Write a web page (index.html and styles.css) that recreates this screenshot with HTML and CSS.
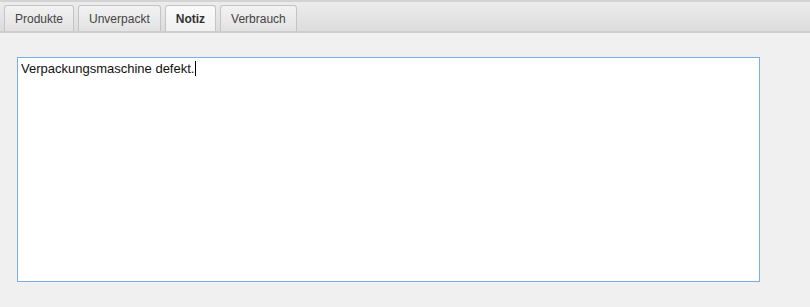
FILE: index.html
```html
<!DOCTYPE html>
<html lang="de">
<head>
    <meta charset="UTF-8">
    <title>Notiz</title>
    <link rel="stylesheet" href="styles.css">
</head>
<body>

<div class="tabbar">
    <div class="tab">Produkte</div>
    <div class="tab">Unverpackt</div>
    <div class="tab active">Notiz</div>
    <div class="tab">Verbrauch</div>
</div>

<div class="content">
    <div class="note">Verpackungsmaschine defekt.<span class="caret"></span></div>
</div>

</body>
</html>
```

FILE: styles.css
```css
body {
    margin: 0;
    background-color: #f0f0f0;
    font-family: "Liberation Sans", Arial, sans-serif;
    color: #222;
}

.tabbar {
    display: flex;
    gap: 4px;
    height: 26px;
    padding: 3px 4px 0;
    border-top: 2px solid #d3d3d3;
    border-bottom: 2px solid #cdcdcd;
    background: linear-gradient(#ececec, #dcdcdc);
}

.tab {
    display: flex;
    align-items: center;
    padding: 0 10px;
    font-size: 12px;
    color: #444;
    border: 1px solid #c4c4c4;
    border-bottom: none;
    border-radius: 3px 3px 0 0;
    background: linear-gradient(#f2f2f2, #e2e2e2);
}

.tab.active {
    font-weight: bold;
    color: #333;
    background: linear-gradient(#fafafa, #f0f0f0);
}

.content {
    padding: 24px 17px;
}

.note {
    box-sizing: border-box;
    width: 743px;
    height: 225px;
    padding: 3px;
    border: 1px solid #7aaee4;
    background: #fff;
    font-size: 13px;
    line-height: 16px;
    color: #111;
}

.caret {
    display: inline-block;
    width: 1px;
    height: 15px;
    margin-left: 1px;
    vertical-align: -3px;
    background: #000;
}
```
